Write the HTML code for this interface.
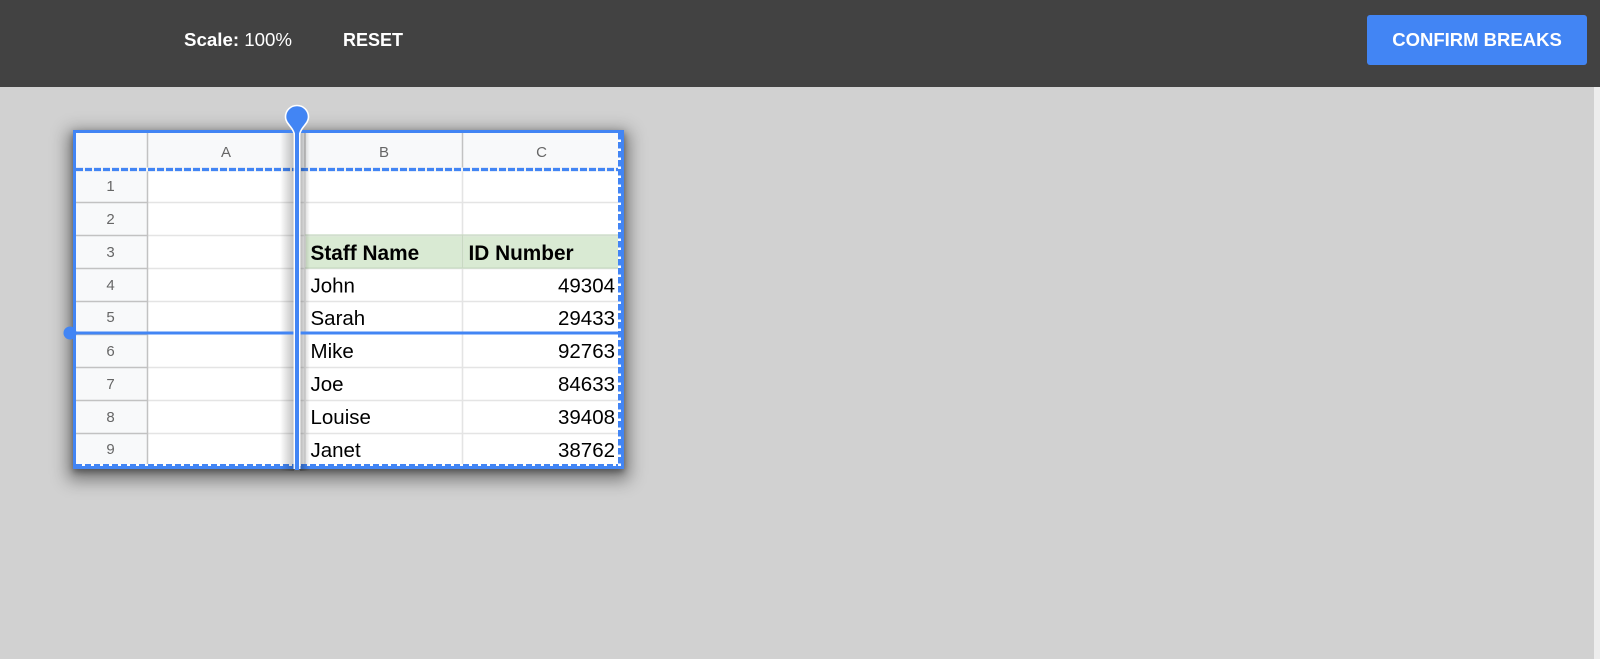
<!DOCTYPE html>
<html>
<head>
<meta charset="utf-8">
<style>
html,body{margin:0;padding:0;width:1600px;height:659px;overflow:hidden;background:#d1d1d1}
#bar{position:absolute;left:0;top:0;width:1600px;height:86.5px;background:#424242}
.t{position:absolute;color:#fff;font-family:"Liberation Sans",sans-serif;font-size:18.7px;line-height:24px;white-space:nowrap}
#btn{position:absolute;left:1367px;top:15px;width:220px;height:50px;background:#4285f4;border-radius:3px;color:#fff;font:bold 18.5px/50px "Liberation Sans",sans-serif;text-align:center}
#strip{position:absolute;left:1594px;top:87px;width:6px;height:572px;background:#ededed}
#box{position:absolute;left:73px;top:130px;width:551px;height:339px;box-shadow:0 6px 16px 5px rgba(0,0,0,.42),0 3px 6px rgba(0,0,0,.35)}
svg{position:absolute;left:0;top:0}
.h{font:15px "Liberation Sans",sans-serif;fill:#666;text-anchor:middle}
.c{font:20.5px "Liberation Sans",sans-serif;fill:#000}
.b{font-weight:bold}
.r{text-anchor:end}
</style>
</head>
<body>
<div id="bar"></div>
<div class="t" style="left:184px;top:28px"><b>Scale:</b> 100%</div>
<div class="t" style="left:343px;top:28px;font-size:18px"><b>RESET</b></div>
<div id="btn">CONFIRM BREAKS</div>
<div id="strip"></div>
<div id="box"></div>
<svg width="1600" height="659" viewBox="0 0 1600 659">
<defs>
<linearGradient id="gl" x1="0" x2="1" y1="0" y2="0"><stop offset="0" stop-color="#000" stop-opacity="0"/><stop offset="1" stop-color="#000" stop-opacity=".24"/></linearGradient>
<linearGradient id="gr" x1="0" x2="1" y1="0" y2="0"><stop offset="0" stop-color="#000" stop-opacity=".28"/><stop offset="1" stop-color="#000" stop-opacity="0"/></linearGradient>
</defs>
<rect x="73" y="130" width="551" height="339" fill="#fff"/>
<rect x="76" y="133" width="545" height="36" fill="#f8f9fa"/>
<rect x="76" y="169" width="71" height="297" fill="#f8f9fa"/>
<rect x="305" y="235" width="316" height="33" fill="#d9ead3"/>
<g stroke="#e4e4e4" stroke-width="1.6">
<path d="M147 202.5H621M147 235.5H621M147 268.5H621M147 301.5H621M147 367.5H621M147 400.5H621M147 433.5H621"/>
<path d="M462.5 169V466M305 169V466"/>
</g>
<path d="M305 235H621M305 268H621M462.5 235V268" stroke="#c8d9c2" stroke-width="1.2"/>
<g stroke="#c2c2c2" stroke-width="1.5" fill="none">
<path d="M76 202.5H147M76 235.5H147M76 268.5H147M76 301.5H147M76 334.5H147M76 367.5H147M76 400.5H147M76 433.5H147"/>
<path d="M147.5 133V466M305 133V169M462.5 133V169"/>
</g>
<text class="h" x="226" y="157">A</text>
<text class="h" x="384" y="157">B</text>
<text class="h" x="541.5" y="157">C</text>
<text class="h" x="110.5" y="191">1</text>
<text class="h" x="110.5" y="224">2</text>
<text class="h" x="110.5" y="257">3</text>
<text class="h" x="110.5" y="290">4</text>
<text class="h" x="110.5" y="322">5</text>
<text class="h" x="110.5" y="356">6</text>
<text class="h" x="110.5" y="389">7</text>
<text class="h" x="110.5" y="422">8</text>
<text class="h" x="110.5" y="454">9</text>
<text class="c b" x="310.5" y="260" style="font-size:20.8px">Staff Name</text>
<text class="c b" x="468.5" y="260" style="font-size:20.8px">ID Number</text>
<text class="c" x="310.5" y="292.5">John</text>
<text class="c r" x="615" y="292.5">49304</text>
<text class="c" x="310.5" y="325">Sarah</text>
<text class="c r" x="615" y="325">29433</text>
<text class="c" x="310.5" y="358">Mike</text>
<text class="c r" x="615" y="358">92763</text>
<text class="c" x="310.5" y="391">Joe</text>
<text class="c r" x="615" y="391">84633</text>
<text class="c" x="310.5" y="424">Louise</text>
<text class="c r" x="615" y="424">39408</text>
<text class="c" x="310.5" y="457">Janet</text>
<text class="c r" x="615" y="457">38762</text>
<path d="M76 169.5H621" stroke="#f4f4f4" stroke-width="4"/>
<path d="M76 169.5H621" stroke="#4285f4" stroke-width="3.2" stroke-dasharray="7 2"/>
<path d="M76 465.5H621" stroke="#fff" stroke-width="3"/>
<path d="M76 465.5H621" stroke="#4285f4" stroke-width="3" stroke-dasharray="6 3"/>
<path d="M620 133V466" stroke="#fff" stroke-width="4"/>
<path d="M620 133V466" stroke="#4285f4" stroke-width="4" stroke-dasharray="6.5 2.5"/>
<rect x="74.5" y="131.5" width="548" height="336" fill="none" stroke="#4285f4" stroke-width="3"/>
<rect x="280" y="133" width="14" height="338" fill="url(#gl)"/>
<rect x="300" y="133" width="10" height="338" fill="url(#gr)"/>
<path d="M70 333H293.5M300.5 333H621" stroke="#4285f4" stroke-width="3"/>
<circle cx="70" cy="333" r="6.5" fill="#4285f4"/>
<rect x="293.5" y="130" width="7" height="339" fill="#fff" opacity=".9"/>
<rect x="295" y="128" width="4" height="342" fill="#4285f4"/>
<path d="M297 105.5C303.5 105.5 308.5 110.5 308.5 117C308.5 124 300.5 127 299.5 135H294.5C293.5 127 285.5 124 285.5 117C285.5 110.5 290.5 105.5 297 105.5Z" fill="#4285f4" stroke="#fff" stroke-width="1.6"/>
<rect x="295" y="126" width="4" height="12" fill="#4285f4"/>
</svg>
</body>
</html>
